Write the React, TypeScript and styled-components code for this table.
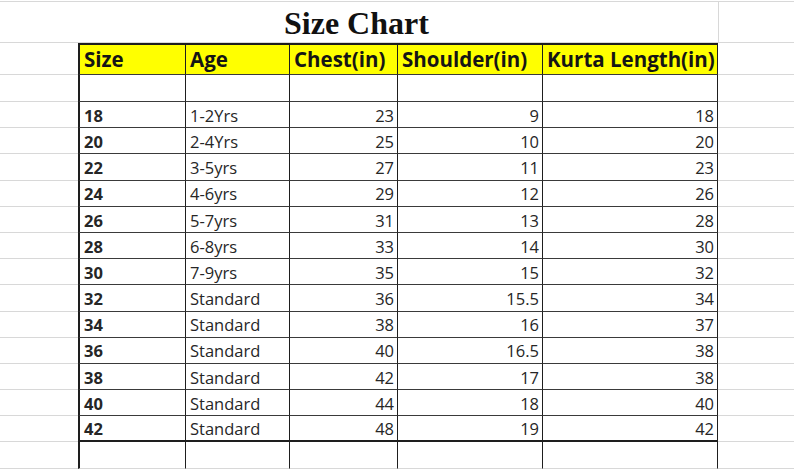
import styled, { createGlobalStyle } from 'styled-components';

const GlobalStyle = createGlobalStyle`
    html, body {
        margin: 0;
        padding: 0;
        background: #ffffff;
    }
    body {
        font-family: "Open Sans", "Noto Sans", sans-serif;
        color: #222;
    }
`;

const COLUMNS = '78px 108px 104px 108px 145px 175px 1fr';
const GRID = '#d8d8d8';
const INK = '#262626';

const Sheet = styled.div`
    width: 794px;
    height: 470px;
    overflow: hidden;
    border-top: 1px solid ${GRID};
    margin-top: 1px;
    box-sizing: border-box;
`;

const Row = styled.div<{ h: number }>`
    display: grid;
    grid-template-columns: ${COLUMNS};
    height: ${({ h }) => h}px;
`;

// grey spreadsheet gridline cell outside the table
const Gutter = styled.div<{ edge?: boolean }>`
    box-sizing: border-box;
    border-bottom: 1px solid ${GRID};
    border-left: ${({ edge }) => (edge ? `1px solid ${GRID}` : 'none')};
`;

const TitleCell = styled.div`
    grid-column: 2 / 6;
    box-sizing: border-box;
    border-bottom: 1px solid ${GRID};
    display: flex;
    align-items: flex-end;
    padding-left: 206px;
    padding-bottom: 3px;
    font-family: "Liberation Serif", "Times New Roman", serif;
    font-weight: bold;
    font-size: 32px;
    line-height: 1;
    color: #111;
`;

const TitleTail = styled.div`
    box-sizing: border-box;
    border-bottom: 1px solid ${GRID};
`;

const Cell = styled.div<{ first?: boolean; right?: boolean; bold?: boolean; head?: boolean; last?: boolean }>`
    box-sizing: border-box;
    display: flex;
    align-items: flex-end;
    justify-content: ${({ right }) => (right ? 'flex-end' : 'flex-start')};
    padding: 0 3px 1px 4px;
    background: ${({ head }) => (head ? '#ffff00' : '#ffffff')};
    border-right: 1.5px solid #1e1e1e;
    border-left: ${({ first }) => (first ? '2px solid #1e1e1e' : 'none')};
    border-top: ${({ head }) => (head ? '2px solid #1e1e1e' : 'none')};
    border-bottom: ${({ last }) => (last ? '2px solid #1e1e1e' : '1.5px solid #3a3a3a')};
    font-size: ${({ head }) => (head ? '20.5px' : '16.5px')};
    font-weight: ${({ bold, head }) => (bold || head ? 700 : 400)};
    color: ${({ head }) => (head ? '#151515' : INK)};
    line-height: 1.3;
    white-space: nowrap;
`;

const OpenCell = styled.div<{ first?: boolean }>`
    box-sizing: border-box;
    border-right: 1.5px solid #1e1e1e;
    border-left: ${({ first }) => (first ? '2px solid #1e1e1e' : 'none')};
    border-bottom: 1px solid ${GRID};
`;

const headers = ['Size', 'Age', 'Chest(in)', 'Shoulder(in)', 'Kurta Length(in)'];

const rows: [string, string, string, string, string][] = [
    ['18', '1-2Yrs', '23', '9', '18'],
    ['20', '2-4Yrs', '25', '10', '20'],
    ['22', '3-5yrs', '27', '11', '23'],
    ['24', '4-6yrs', '29', '12', '26'],
    ['26', '5-7yrs', '31', '13', '28'],
    ['28', '6-8yrs', '33', '14', '30'],
    ['30', '7-9yrs', '35', '15', '32'],
    ['32', 'Standard', '36', '15.5', '34'],
    ['34', 'Standard', '38', '16', '37'],
    ['36', 'Standard', '40', '16.5', '38'],
    ['38', 'Standard', '42', '17', '38'],
    ['40', 'Standard', '44', '18', '40'],
    ['42', 'Standard', '48', '19', '42'],
];

const App = () => {
    return (
        <>
            <GlobalStyle />
            <Sheet>
                <Row h={41}>
                    <Gutter />
                    <TitleCell>Size Chart</TitleCell>
                    <TitleTail />
                    <Gutter edge />
                </Row>
                <Row h={32}>
                    <Gutter />
                    {headers.map((h, i) => (
                        <Cell key={h} head first={i === 0}>{h}</Cell>
                    ))}
                    <Gutter />
                </Row>
                <Row h={27}>
                    <Gutter />
                    {headers.map((h, i) => (
                        <Cell key={h} first={i === 0} />
                    ))}
                    <Gutter />
                </Row>
                {rows.map((r, ri) => (
                    <Row key={r[0]} h={26.2}>
                        <Gutter />
                        <Cell first bold last={ri === rows.length - 1}>{r[0]}</Cell>
                        <Cell last={ri === rows.length - 1}>{r[1]}</Cell>
                        <Cell right last={ri === rows.length - 1}>{r[2]}</Cell>
                        <Cell right last={ri === rows.length - 1}>{r[3]}</Cell>
                        <Cell right last={ri === rows.length - 1}>{r[4]}</Cell>
                        <Gutter />
                    </Row>
                ))}
                <Row h={27}>
                    <Gutter />
                    {headers.map((h, i) => (
                        <OpenCell key={h} first={i === 0} />
                    ))}
                    <Gutter />
                </Row>
            </Sheet>
        </>
    );
};

export default App;
